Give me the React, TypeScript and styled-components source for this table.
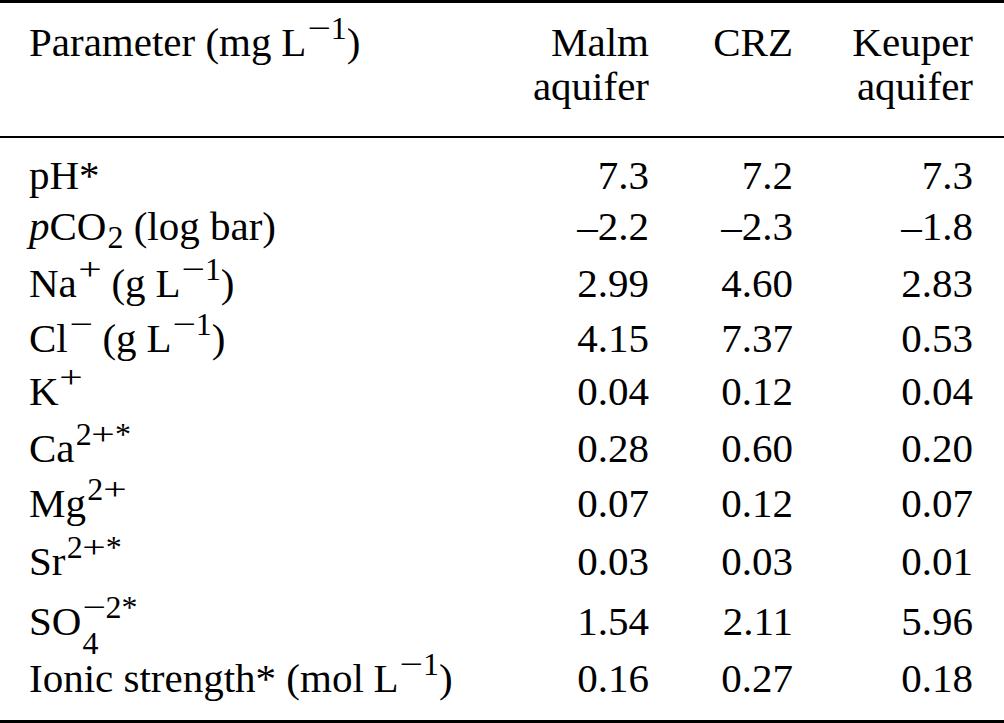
import React from "react";
import styled, { createGlobalStyle } from "styled-components";

const GlobalStyle = createGlobalStyle`
  html, body {
    margin: 0;
    padding: 0;
    background: #ffffff;
  }
  body {
    font-family: "Liberation Serif", "Times New Roman", serif;
    color: #000000;
  }
`;

const Table = styled.div`
  width: 1004px;
  box-sizing: border-box;
  border-top: 3px solid #000;
  border-bottom: 3px solid #000;
  font-size: 41px;
  line-height: 44px;
`;

const Head = styled.div`
  display: grid;
  grid-template-columns: 1fr 120px 144px 180px;
  padding: 17px 31px 28px 29px;
  border-bottom: 2px solid #000;
`;

const Body = styled.div`
  padding-bottom: 20px;
`;

const Row = styled.div<{ $pt: number }>`
  display: grid;
  grid-template-columns: 1fr 120px 144px 180px;
  padding: ${(p) => p.$pt}px 31px 0 29px;
  height: 44px;
`;

const Cell = styled.div<{ $right?: boolean }>`
  text-align: ${(p) => (p.$right ? "right" : "left")};
  white-space: nowrap;
`;

const Sup = styled.span`
  font-size: 0.78em;
  line-height: 0;
  vertical-align: 0.53em;
  margin-left: 0.04em;
`;

const Sub = styled.span`
  font-size: 0.78em;
  line-height: 0;
  vertical-align: -0.25em;
  margin-left: 0.03em;
`;

/* stacked superscript over subscript (e.g. SO4 with charge) */
const Stack = styled.span`
  display: inline-flex;
  flex-direction: column;
  align-items: flex-start;
  font-size: 0.78em;
  line-height: 1.14em;
  vertical-align: 0.54em;
  margin: -1em 0 -1em 0.03em;
`;

const Op = styled.span`
  display: inline-block;
  transform: scaleX(1.3);
  margin: 0 0.08em;
`;

const It = styled.span`
  font-style: italic;
`;

const Thin = styled.span`
  display: inline-block;
  width: 0.24em;
`;

const perL = (
  <>
    L
    <Sup>
      <Op>−</Op>1
    </Sup>
  </>
);

type RowData = { label: React.ReactNode; v: [string, string, string]; pt: number };

const rows: RowData[] = [
  { label: <>pH*</>, v: ["7.3", "7.2", "7.3"], pt: 15 },
  {
    label: (
      <>
        <It>p</It>CO<Sub>2</Sub> (log bar)
      </>
    ),
    v: ["–2.2", "–2.3", "–1.8"],
    pt: 7,
  },
  {
    label: (
      <>
        Na
        <Sup>
          <Op>+</Op>
        </Sup>{" "}
        (g<Thin />
        {perL})
      </>
    ),
    v: ["2.99", "4.60", "2.83"],
    pt: 13,
  },
  {
    label: (
      <>
        Cl
        <Sup>
          <Op>−</Op>
        </Sup>{" "}
        (g<Thin />
        {perL})
      </>
    ),
    v: ["4.15", "7.37", "0.53"],
    pt: 11,
  },
  {
    label: (
      <>
        K
        <Sup>
          <Op>+</Op>
        </Sup>
      </>
    ),
    v: ["0.04", "0.12", "0.04"],
    pt: 9,
  },
  {
    label: (
      <>
        Ca
        <Sup>
          2<Op>+</Op>*
        </Sup>
      </>
    ),
    v: ["0.28", "0.60", "0.20"],
    pt: 13,
  },
  {
    label: (
      <>
        Mg
        <Sup>
          2<Op>+</Op>
        </Sup>
      </>
    ),
    v: ["0.07", "0.12", "0.07"],
    pt: 11,
  },
  {
    label: (
      <>
        Sr
        <Sup>
          2<Op>+</Op>*
        </Sup>
      </>
    ),
    v: ["0.03", "0.03", "0.01"],
    pt: 14,
  },
  {
    label: (
      <>
        SO
        <Stack>
          <span>
            <Op>−</Op>2*
          </span>
          <span>4</span>
        </Stack>
      </>
    ),
    v: ["1.54", "2.11", "5.96"],
    pt: 16,
  },
  {
    label: (
      <>
        Ionic strength* (mol<Thin />
        {perL})
      </>
    ),
    v: ["0.16", "0.27", "0.18"],
    pt: 13,
  },
];

export default function App() {
  return (
    <>
      <GlobalStyle />
      <Table>
        <Head>
          <Cell>
            Parameter (mg<Thin />
            {perL})
          </Cell>
          <Cell $right>
            Malm
            <br />
            aquifer
          </Cell>
          <Cell $right>CRZ</Cell>
          <Cell $right>
            Keuper
            <br />
            aquifer
          </Cell>
        </Head>
        <Body>
          {rows.map((r, i) => (
            <Row key={i} $pt={r.pt}>
              <Cell>{r.label}</Cell>
              <Cell $right>{r.v[0]}</Cell>
              <Cell $right>{r.v[1]}</Cell>
              <Cell $right>{r.v[2]}</Cell>
            </Row>
          ))}
        </Body>
      </Table>
    </>
  );
}
